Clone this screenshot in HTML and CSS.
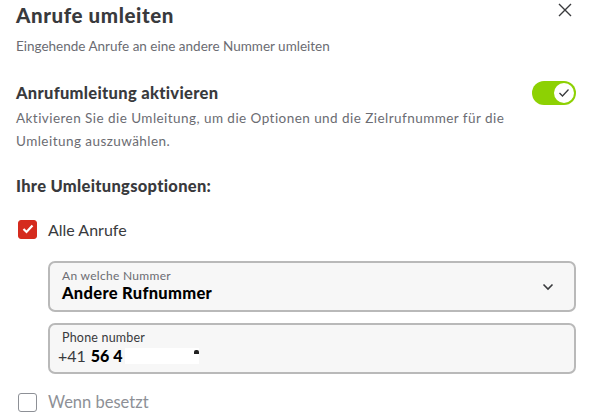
FILE: index.html
```html
<!DOCTYPE html>
<html lang="de">
<head>
<meta charset="utf-8">
<link rel="stylesheet" href="styles.css">
</head>
<body>
<div class="dialog">
  <div class="header">
    <h1 class="title">Anrufe umleiten</h1>
    <button class="close" aria-label="Schließen">
      <svg width="16" height="16" viewBox="0 0 16 16"><path d="M2 2L14 14M14 2L2 14" stroke="#393a3d" stroke-width="1.4" fill="none"/></svg>
    </button>
  </div>
  <p class="subtitle">Eingehende Anrufe an eine andere Nummer umleiten</p>

  <div class="toggle-row">
    <h2 class="section-title">Anrufumleitung aktivieren</h2>
    <span class="toggle">
      <span class="knob">
        <svg width="12" height="10" viewBox="0 0 12 10"><path d="M1.5 5L4.5 8L10.5 1.5" stroke="#393a3d" stroke-width="1.3" fill="none"/></svg>
      </span>
    </span>
  </div>
  <p class="desc">Aktivieren Sie die Umleitung, um die Optionen und die Zielrufnummer für die Umleitung auszuwählen.</p>

  <h2 class="section-title options-title">Ihre Umleitungsoptionen:</h2>

  <label class="check-row">
    <span class="box checked">
      <svg width="12" height="10" viewBox="0 0 12 10"><path d="M1.5 5L4.5 8L10.5 1.5" stroke="#fff" stroke-width="2.2" fill="none"/></svg>
    </span>
    <span class="check-label">Alle Anrufe</span>
  </label>

  <div class="fields">
    <div class="field select">
      <div class="field-text">
        <span class="field-label">An welche Nummer</span>
        <span class="field-value">Andere Rufnummer</span>
      </div>
      <svg class="chev" width="12" height="8" viewBox="0 0 12 8"><path d="M1.5 1.5L6 6L10.5 1.5" stroke="#393a3d" stroke-width="1.6" fill="none"/></svg>
    </div>
    <div class="field">
      <div class="field-text">
        <span class="field-label phone-label">Phone number</span>
        <span class="phone"><span class="prefix">+41</span> <b>56 4</b><span class="redact"><span class="mark"></span></span></span>
      </div>
    </div>
  </div>

  <label class="check-row second">
    <span class="box"></span>
    <span class="check-label muted">Wenn besetzt</span>
  </label>
</div>
</body>
</html>
```
FILE: styles.css
```css
html, body {
  margin: 0;
  padding: 0;
  background: #fff;
}
body {
  font-family: Lato, "Open Sans", sans-serif;
  color: #393a3d;
}
.dialog {
  padding: 0 22px 0 16px;
  width: 560px;
}
.header {
  display: flex;
  justify-content: space-between;
  align-items: flex-start;
  height: 30px;
}
.title {
  margin: 3px 0 0 0;
  font-size: 20.5px;
  letter-spacing: 0.6px;
  line-height: 24px;
  font-weight: 900;
  color: #393a3d;
}
.close {
  border: 0;
  background: none;
  padding: 0;
  margin: 2px 3px 0 0;
  width: 16px;
  height: 16px;
  display: flex;
}
.subtitle {
  margin: 7px 0 0 0;
  font-size: 13.5px;
  line-height: 18px;
  color: #6b6c72;
}
.toggle-row {
  margin-top: 26px;
  display: flex;
  justify-content: space-between;
  align-items: center;
  height: 24px;
}
.section-title {
  margin: 0;
  font-size: 16.5px;
  letter-spacing: 0.3px;
  line-height: 20px;
  font-weight: 900;
  color: #393a3d;
}
.toggle {
  width: 44px;
  height: 24px;
  border-radius: 12px;
  background: #8dd103;
  display: flex;
  align-items: center;
  justify-content: flex-end;
  padding-right: 2px;
  box-sizing: border-box;
}
.knob {
  width: 20px;
  height: 20px;
  border-radius: 50%;
  background: #fff;
  display: flex;
  align-items: center;
  justify-content: center;
}
.desc {
  margin: 2px 0 0 0;
  font-size: 13.5px;
  letter-spacing: 0.45px;
  line-height: 23px;
  color: #6b6c72;
  width: 525px;
}
.options-title {
  margin-top: 23px;
}
.check-row {
  display: flex;
  align-items: center;
  margin-top: 23px;
  height: 20px;
}
.box {
  width: 19px;
  height: 19px;
  box-sizing: border-box;
  border-radius: 3px;
  border: 1.5px solid #8d9096;
  margin-left: 2px;
  display: flex;
  align-items: center;
  justify-content: center;
}
.box.checked {
  background: #d52b1e;
  border-color: #d52b1e;
}
.check-label {
  margin-left: 11px;
  font-size: 16px;
  color: #393a3d;
}
.check-label.muted {
  color: #8d9096;
  font-size: 16.5px;
}
.fields {
  margin: 22px 0 0 32px;
  display: flex;
  flex-direction: column;
  gap: 11px;
}
.field {
  height: 51px;
  box-sizing: border-box;
  border: 2px solid #b9b9b9;
  border-radius: 7px;
  background: #f7f7f7;
  display: flex;
  align-items: center;
  justify-content: space-between;
  padding: 0 20px 0 12px;
}
.field-text {
  display: flex;
  flex-direction: column;
}
.field-label {
  font-size: 12px;
  letter-spacing: 0.3px;
  line-height: 14px;
  color: #6b6c72;
}
.phone-label {
  color: #393a3d;
  font-size: 12.5px;
  letter-spacing: 0.2px;
}
.field-value {
  font-size: 16.5px;
  letter-spacing: 0.3px;
  line-height: 21px;
  font-weight: 900;
  color: #000;
}
.phone {
  font-size: 16px;
  line-height: 21px;
  color: #393a3d;
  display: flex;
  align-items: center;
  margin-left: -4px;
}
.phone b {
  color: #000;
  margin-left: 5px;
  font-weight: 900;
}
.redact {
  display: inline-flex;
  justify-content: flex-end;
  width: 74px;
  height: 16px;
  background: #fff;
  margin-left: 3px;
}
.mark {
  width: 5px;
  height: 4px;
  background: #222;
  border-radius: 2px 2px 0 0;
  margin-top: 2px;
}
.check-row.second {
  margin-top: 18px;
}
```
